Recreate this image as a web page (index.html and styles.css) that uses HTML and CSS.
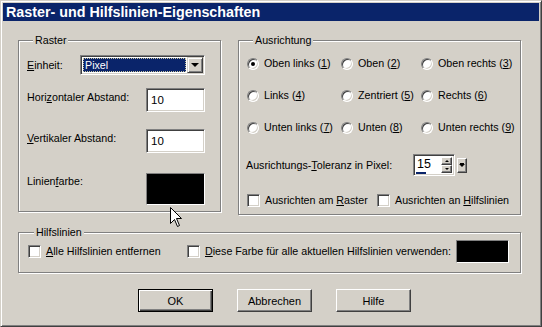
FILE: index.html
```html
<!DOCTYPE html>
<html lang="de">
<head>
    <meta charset="UTF-8">
    <meta name="viewport" content="width=device-width, initial-scale=1.0">
    <title>Raster- und Hilfslinien-Eigenschaften</title>
    <link rel="stylesheet" href="styles.css">
</head>
<body>
    <div class="window">
        <div class="titlebar">Raster- und Hilfslinien-Eigenschaften</div>
        <div class="dialog">
            <div class="top-row">
                <div class="group raster">
                    <div class="group-title">Raster</div>
                    <div class="row row-unit">
                        <span class="lbl"><u>E</u>inheit:</span>
                        <div class="combo">
                            <span class="combo-value"><span class="combo-sel">Pixel</span></span>
                            <span class="combo-btn"><span class="tri-down"></span></span>
                        </div>
                    </div>
                    <div class="row row-h">
                        <span class="lbl">Hori<u>z</u>ontaler Abstand:</span>
                        <div class="edit">10</div>
                    </div>
                    <div class="row row-v">
                        <span class="lbl"><u>V</u>ertikaler Abstand:</span>
                        <div class="edit">10</div>
                    </div>
                    <div class="row row-color">
                        <span class="lbl">Linien<u>f</u>arbe:</span>
                        <div class="swatch swatch-big"></div>
                    </div>
                </div>

                <div class="group align">
                    <div class="group-title">Ausrichtung</div>
                    <div class="radios">
                        <div class="opt"><span class="radio checked"></span><span>Oben links (<u>1</u>)</span></div>
                        <div class="opt"><span class="radio"></span><span>Oben (<u>2</u>)</span></div>
                        <div class="opt"><span class="radio"></span><span>Oben rechts (<u>3</u>)</span></div>
                        <div class="opt"><span class="radio"></span><span>Links (<u>4</u>)</span></div>
                        <div class="opt"><span class="radio"></span><span>Zentriert (<u>5</u>)</span></div>
                        <div class="opt"><span class="radio"></span><span>Rechts (<u>6</u>)</span></div>
                        <div class="opt"><span class="radio"></span><span>Unten links (<u>7</u>)</span></div>
                        <div class="opt"><span class="radio"></span><span>Unten (<u>8</u>)</span></div>
                        <div class="opt"><span class="radio"></span><span>Unten rechts (<u>9</u>)</span></div>
                    </div>
                    <div class="tol-row">
                        <span class="lbl">Ausrichtungs-<u>T</u>oleranz in Pixel:</span>
                        <div class="spin">
                            <div class="spin-edit">
                                <div class="spin-field">
                                    <span class="spin-text">15</span>
                                    <span class="spin-bar"></span>
                                </div>
                                <div class="spin-arrows">
                                    <span class="spin-btn"><span class="tri-up-sm"></span></span>
                                    <span class="spin-btn"><span class="tri-down-sm"></span></span>
                                </div>
                            </div>
                            <span class="spin-drop"><span class="tri-down-sm"></span></span>
                        </div>
                    </div>
                    <div class="check-row">
                        <div class="opt opt-raster"><span class="checkbox"></span><span>Ausrichten am <u>R</u>aster</span></div>
                        <div class="opt"><span class="checkbox"></span><span>Ausrichten an <u>H</u>ilfslinien</span></div>
                    </div>
                </div>
            </div>

            <div class="group guides">
                <div class="group-title">Hilfslinien</div>
                <div class="guides-row">
                    <div class="opt opt-remove"><span class="checkbox"></span><span><u>A</u>lle Hilfslinien entfernen</span></div>
                    <div class="opt"><span class="checkbox"></span><span><u>D</u>iese Farbe für alle aktuellen Hilfslinien verwenden:</span></div>
                    <div class="swatch swatch-small"></div>
                </div>
            </div>

            <div class="buttons">
                <button class="btn btn-default">OK</button>
                <button class="btn">Abbrechen</button>
                <button class="btn">Hilfe</button>
            </div>
        </div>

        <svg class="cursor" width="13" height="21" viewBox="0 0 13 21">
            <path d="M0.5 0.5 L0.5 16.5 L4.5 12.5 L7.5 19.5 L9.5 18.5 L6.5 11.5 L11.5 11.5 Z" fill="#fff" stroke="#000" stroke-width="1"/>
        </svg>
    </div>
</body>
</html>
```

FILE: styles.css
```css
body {
    margin: 0;
    padding: 0;
    background: #d4d0c8;
    font-family: 'Liberation Sans', Arial, sans-serif;
    font-size: 10.7px;
    color: #000;
}

.window {
    position: relative;
    width: 542px;
    height: 327px;
    box-sizing: border-box;
    padding: 2px;
    border: 1px solid;
    border-color: #d4d0c8 #404040 #404040 #d4d0c8;
    box-shadow: inset 1px 1px #fff, inset -1px -1px #808080;
    background: #d4d0c8;
}

.titlebar {
    height: 18px;
    line-height: 18px;
    padding-left: 3px;
    background: #0a246a;
    color: #fff;
    font-weight: bold;
    font-size: 14.3px;
    white-space: nowrap;
}

.dialog {
    padding: 19px 0 0 15px;
}

.top-row {
    display: flex;
    align-items: flex-start;
    gap: 17px;
}

/* etched group box */
.group {
    box-sizing: border-box;
    border: 1px solid #808080;
    box-shadow: inset 1px 1px #fff, 1px 1px #fff;
}

.group-title {
    display: table;
    margin: -7px 0 0 6px;
    padding: 0 2px;
    line-height: 13px;
    background: #d4d0c8;
}

.lbl {
    white-space: nowrap;
    line-height: 13px;
}

/* Raster */
.raster {
    width: 203px;
    height: 172px;
    padding: 0 15px 0 8px;
}

.row {
    display: flex;
    justify-content: space-between;
    align-items: flex-start;
}

.row-unit {
    margin-top: 8px;
    align-items: center;
}

.row-h {
    margin-top: 13px;
}

.row-v {
    margin-top: 17px;
}

.row-color {
    margin-top: 20px;
}

.row-h .lbl, .row-v .lbl {
    padding-top: 3px;
}

.row-color .lbl {
    padding-top: 2px;
}

.combo {
    display: flex;
    width: 125px;
    height: 20px;
    box-sizing: border-box;
    border: 1px solid;
    border-color: #808080 #fff #fff #808080;
    box-shadow: inset 1px 1px #404040, inset -1px -1px #d4d0c8;
    background: #fff;
    padding: 2px;
}

.combo-value {
    flex: 1;
    padding: 0 1px 0 0;
}

.combo-sel {
    display: block;
    height: 14px;
    line-height: 14px;
    padding-left: 2px;
    background: #0a246a;
    color: #fff;
    outline: 1px dotted #c8c4a0;
    outline-offset: -1px;
}

.combo-btn {
    width: 16px;
    box-sizing: border-box;
    display: flex;
    align-items: center;
    justify-content: center;
    background: #d4d0c8;
    border: 1px solid;
    border-color: #d4d0c8 #404040 #404040 #d4d0c8;
    box-shadow: inset 1px 1px #fff, inset -1px -1px #808080;
    margin: -1px -1px -1px 0;
}

.tri-down {
    width: 0;
    height: 0;
    border-left: 4px solid transparent;
    border-right: 4px solid transparent;
    border-top: 4px solid #000;
}

.edit {
    width: 59px;
    height: 24px;
    box-sizing: border-box;
    border: 1px solid;
    border-color: #808080 #fff #fff #808080;
    box-shadow: inset 1px 1px #404040, inset -1px -1px #d4d0c8;
    background: #fff;
    padding-left: 4px;
    line-height: 22px;
    font-size: 11.5px;
}

.swatch {
    box-sizing: border-box;
    background: #000;
    border: 1px solid;
    border-color: #808080 #fff #fff #808080;
}

.swatch-big {
    width: 59px;
    height: 32px;
}

.swatch-small {
    width: 53px;
    height: 23px;
    margin-left: auto;
}

/* Ausrichtung */
.align {
    width: 283px;
    height: 175px;
    padding: 0 8px;
}

.radios {
    display: grid;
    grid-template-columns: 94px 80px auto;
    row-gap: 19px;
    margin-top: 10px;
}

.opt {
    display: flex;
    align-items: center;
    line-height: 13px;
    white-space: nowrap;
}

.radio {
    width: 12px;
    height: 12px;
    box-sizing: border-box;
    border-radius: 50%;
    border: 1px solid;
    border-color: #808080 #fff #fff #808080;
    box-shadow: inset 1px 1px #404040, inset -1px -1px #d4d0c8;
    background: #fff;
    margin-right: 5px;
    position: relative;
}

.radio.checked::after {
    content: '';
    position: absolute;
    left: 3px;
    top: 3px;
    width: 4px;
    height: 4px;
    border-radius: 50%;
    background: #000;
}

.tol-row {
    display: flex;
    align-items: center;
    margin-top: 20px;
    height: 22px;
}

.tol-row .lbl {
    margin-left: -1px;
    width: 167px;
}

.spin {
    display: flex;
    align-items: center;
    gap: 2px;
}

.spin-edit {
    display: flex;
    width: 42px;
    height: 22px;
    box-sizing: border-box;
    border: 1px solid;
    border-color: #808080 #fff #fff #808080;
    box-shadow: inset 1px 1px #404040, inset -1px -1px #d4d0c8;
    background: #fff;
    padding: 2px 2px 1px;
}

.spin-field {
    flex: 1;
    display: flex;
    flex-direction: column;
}

.spin-text {
    flex: 1;
    font-size: 12.5px;
    line-height: 15px;
    padding-left: 1px;
}

.spin-bar {
    width: 10px;
    height: 2px;
    background: #0a246a;
}

.spin-arrows {
    display: flex;
    flex-direction: column;
    width: 11px;
}

.spin-btn, .spin-drop {
    display: flex;
    align-items: center;
    justify-content: center;
    box-sizing: border-box;
    background: #d4d0c8;
    border: 1px solid;
    border-color: #fff #404040 #404040 #fff;
    box-shadow: inset -1px -1px #808080;
}

.spin-btn {
    height: 8px;
}

.spin-drop {
    width: 10px;
    height: 15px;
}

.tri-up-sm {
    width: 0;
    height: 0;
    border-left: 2px solid transparent;
    border-right: 2px solid transparent;
    border-bottom: 2px solid #000;
}

.tri-down-sm {
    width: 0;
    height: 0;
    border-left: 2px solid transparent;
    border-right: 2px solid transparent;
    border-top: 2px solid #000;
}

.spin-drop .tri-down-sm {
    border-left-width: 3px;
    border-right-width: 3px;
    border-top-width: 3px;
    box-shadow: 0 -2px 0 -1px #000;
}

.check-row {
    display: flex;
    margin-top: 18px;
}

.opt-raster {
    width: 130px;
}

.checkbox {
    width: 13px;
    height: 13px;
    box-sizing: border-box;
    border: 1px solid;
    border-color: #808080 #fff #fff #808080;
    box-shadow: inset 1px 1px #404040, inset -1px -1px #d4d0c8;
    background: #fff;
    margin-right: 5px;
}

/* Hilfslinien */
.guides {
    width: 503px;
    height: 41px;
    margin-top: 17px;
    padding: 0 11px 0 9px;
}

.guides-row {
    display: flex;
    align-items: center;
    margin-top: 1px;
    height: 23px;
}

.opt-remove {
    width: 159px;
}

/* buttons */
.buttons {
    display: flex;
    gap: 24px;
    margin: 16px 0 0 120px;
}

.btn {
    width: 75px;
    height: 23px;
    padding: 0;
    font-family: inherit;
    font-size: 11px;
    color: #000;
    background: #d4d0c8;
    border: 1px solid;
    border-color: #fff #404040 #404040 #fff;
    box-shadow: inset -1px -1px #808080;
}

.btn-default {
    border-color: #000;
    box-shadow: inset 1px 1px #fff, inset -1px -1px #404040, inset -2px -2px #808080;
}

.cursor {
    position: absolute;
    left: 169px;
    top: 206px;
}
```
